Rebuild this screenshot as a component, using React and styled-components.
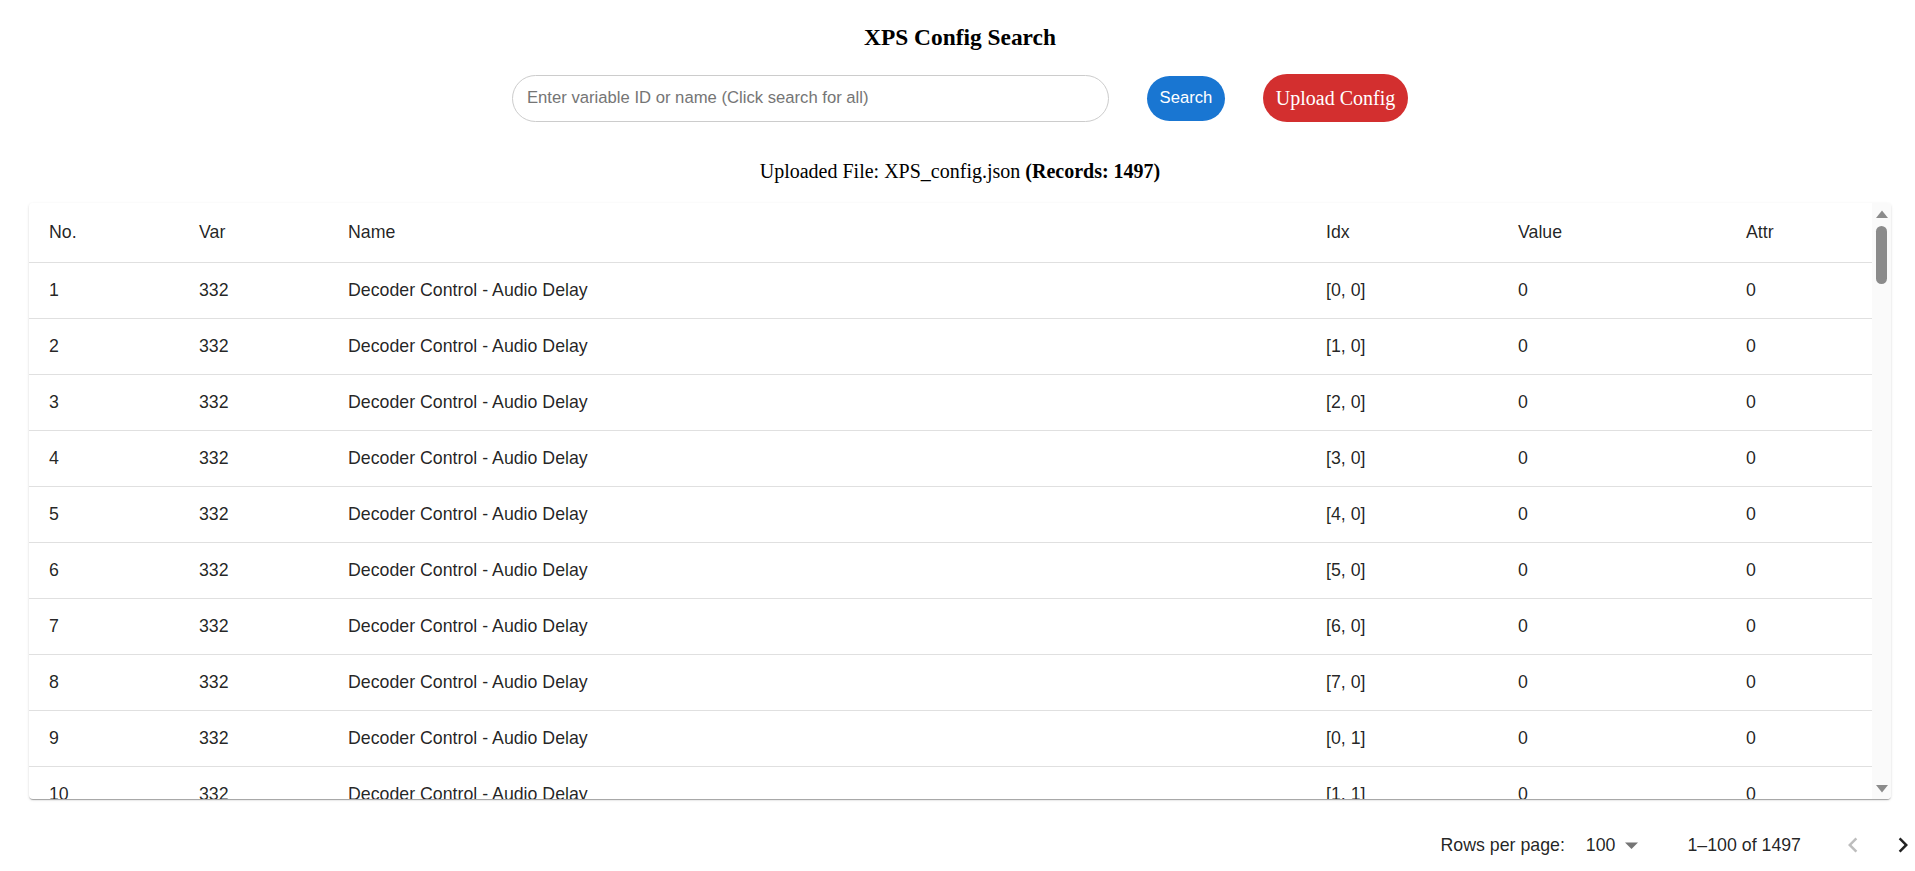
import React from 'react';
import styled, { createGlobalStyle } from 'styled-components';

const GlobalStyle = createGlobalStyle`
  html, body {
    margin: 0;
    padding: 0;
    background: #ffffff;
  }
  body {
    font-family: "Liberation Serif", "Times New Roman", serif;
    color: #000000;
  }
`;

const columns = [
  { key: 'no', label: 'No.', width: 150 },
  { key: 'var', label: 'Var', width: 149 },
  { key: 'name', label: 'Name', width: 978 },
  { key: 'idx', label: 'Idx', width: 192 },
  { key: 'value', label: 'Value', width: 228 },
  { key: 'attr', label: 'Attr', width: 146 },
];

const rows = Array.from({ length: 100 }, (_, i) => ({
  no: i + 1,
  var: 332,
  name: 'Decoder Control - Audio Delay',
  idx: `[${i % 8}, ${Math.floor(i / 8)}]`,
  value: 0,
  attr: 0,
}));

const PageWrapper = styled.div`
  display: flex;
  flex-direction: column;
  padding: 23px 24px 0 29px;
`;

const Title = styled.h2`
  margin: 0;
  text-align: center;
  font-size: 23.4px;
  line-height: 28px;
  font-weight: 700;
`;

const SearchBar = styled.div`
  margin-top: 23px;
  height: 48px;
  display: flex;
  align-items: center;
  justify-content: center;
  gap: 38px;
`;

const SearchInput = styled.input`
  width: 597px;
  height: 47px;
  box-sizing: border-box;
  border: 1px solid #cccccc;
  border-radius: 24px;
  padding: 0 14px;
  font-family: "Liberation Sans", Arial, sans-serif;
  font-size: 16.67px;
  color: #000000;
  outline: none;
  &::placeholder {
    color: #757575;
  }
`;

const PillButton = styled.button`
  width: ${(p) => p.$w}px;
  height: ${(p) => p.$h}px;
  padding: 0;
  border: none;
  border-radius: 24px;
  background: ${(p) => p.$bg};
  color: #ffffff;
  font-family: ${(p) => (p.$serif ? '"Liberation Serif", "Times New Roman", serif' : '"Liberation Sans", Arial, sans-serif')};
  font-size: ${(p) => p.$fs}px;
  cursor: pointer;
`;

const FileInfo = styled.p`
  margin: 38px 0 0;
  text-align: center;
  font-size: 20px;
  line-height: 23px;
`;

const TableCard = styled.div`
  margin-top: 20px;
  height: 596px;
  display: flex;
  border-radius: 4px;
  overflow: hidden;
  background: #ffffff;
  box-shadow: 0px 2px 1px -1px rgba(0, 0, 0, 0.2), 0px 1px 1px 0px rgba(0, 0, 0, 0.14), 0px 1px 3px 0px rgba(0, 0, 0, 0.12);
`;

const TableViewport = styled.div`
  flex: 1;
  min-width: 0;
  overflow-y: auto;
  overflow-x: hidden;
  scrollbar-width: none;
  &::-webkit-scrollbar {
    display: none;
  }
`;

const ScrollRail = styled.div`
  width: 19px;
  flex-shrink: 0;
  display: flex;
  flex-direction: column;
  background: #fafafa;
`;

const RailArrow = styled.div`
  height: 19px;
  display: flex;
  align-items: center;
  justify-content: center;
  padding-top: ${(p) => (p.$up ? 2 : 0)}px;
  padding-bottom: ${(p) => (p.$up ? 0 : 2)}px;
  box-sizing: border-box;
`;

const RailTrack = styled.div`
  flex: 1;
  display: flex;
  justify-content: center;
`;

const RailThumb = styled.div`
  margin-top: 4px;
  width: 11px;
  height: 58px;
  border-radius: 6px;
  background: #8b8b8b;
`;

const DataTable = styled.table`
  width: 100%;
  table-layout: fixed;
  border-collapse: separate;
  border-spacing: 0;
  font-family: "Liberation Sans", Arial, sans-serif;
  font-size: 17.75px;
  color: rgba(0, 0, 0, 0.87);
`;

const HeadCell = styled.th`
  position: sticky;
  top: 0;
  z-index: 1;
  box-sizing: border-box;
  height: 60px;
  padding: 0 20px;
  background: #ffffff;
  border-bottom: 1px solid #e0e0e0;
  text-align: left;
  font-weight: 400;
  white-space: nowrap;
`;

const BodyCell = styled.td`
  box-sizing: border-box;
  height: 56px;
  padding: 0 20px;
  border-bottom: 1px solid #e0e0e0;
  white-space: nowrap;
  overflow: hidden;
`;

const PaginationBar = styled.div`
  margin: 20px -22px 0 0;
  height: 52px;
  display: flex;
  align-items: center;
  justify-content: flex-end;
  font-family: "Liberation Sans", Arial, sans-serif;
  font-size: 17.75px;
  color: rgba(0, 0, 0, 0.87);
`;

const PageLabel = styled.span`
  margin-left: ${(p) => p.$ml || 0}px;
  white-space: nowrap;
`;

const RowsSelect = styled.div`
  margin-left: 21px;
  display: flex;
  align-items: center;
  gap: 10px;
  cursor: pointer;
`;

const NavButton = styled.button`
  margin-left: ${(p) => p.$ml}px;
  padding: 0;
  border: none;
  background: transparent;
  display: flex;
  color: ${(p) => (p.disabled ? '#bdbdbd' : '#222222')};
  cursor: ${(p) => (p.disabled ? 'default' : 'pointer')};
`;

const DropArrow = () => (
  <svg width="13" height="7" viewBox="0 0 13 7">
    <path d="M0 0.5 L6.5 7 L13 0.5 Z" fill="#757575" />
  </svg>
);

const RailTriangle = ({ up }) => (
  <svg width="12" height="8" viewBox="0 0 12 8">
    <path d={up ? 'M6 0.5 L12 8 L0 8 Z' : 'M0 0 L12 0 L6 7.5 Z'} fill="#8b8b8b" />
  </svg>
);

const ChevronLeft = () => (
  <svg width="20" height="30" viewBox="4 0 16 24">
    <path fill="currentColor" d="M15.41 16.59 10.83 12l4.58-4.59L14 6l-6 6 6 6 1.41-1.41z" />
  </svg>
);

const ChevronRight = () => (
  <svg width="20" height="30" viewBox="4 0 16 24">
    <path fill="currentColor" d="M8.59 16.59 13.17 12 8.59 7.41 10 6l6 6-6 6-1.41-1.41z" />
  </svg>
);

const App = () => {
  return (
    <>
      <GlobalStyle />
      <PageWrapper>
        <Title>XPS Config Search</Title>
        <SearchBar>
          <SearchInput placeholder="Enter variable ID or name (Click search for all)" />
          <PillButton $w={78} $h={45} $bg="#1976d2" $fs={16.67}>Search</PillButton>
          <PillButton $w={145} $h={48} $bg="#d32f2f" $fs={20} $serif>Upload Config</PillButton>
        </SearchBar>
        <FileInfo>
          Uploaded File: XPS_config.json <b>(Records: 1497)</b>
        </FileInfo>
        <TableCard>
          <TableViewport>
            <DataTable>
              <colgroup>
                {columns.map((col) => (
                  <col key={col.key} style={{ width: col.width }} />
                ))}
              </colgroup>
              <thead>
                <tr>
                  {columns.map((col) => (
                    <HeadCell key={col.key}>{col.label}</HeadCell>
                  ))}
                </tr>
              </thead>
              <tbody>
                {rows.map((row) => (
                  <tr key={row.no}>
                    {columns.map((col) => (
                      <BodyCell key={col.key}>{row[col.key]}</BodyCell>
                    ))}
                  </tr>
                ))}
              </tbody>
            </DataTable>
          </TableViewport>
          <ScrollRail>
            <RailArrow $up>
              <RailTriangle up />
            </RailArrow>
            <RailTrack>
              <RailThumb />
            </RailTrack>
            <RailArrow>
              <RailTriangle />
            </RailArrow>
          </ScrollRail>
        </TableCard>
        <PaginationBar>
          <PageLabel>Rows per page:</PageLabel>
          <RowsSelect>
            <span>100</span>
            <DropArrow />
          </RowsSelect>
          <PageLabel $ml={49}>1–100 of 1497</PageLabel>
          <NavButton $ml={42} disabled>
            <ChevronLeft />
          </NavButton>
          <NavButton $ml={30}>
            <ChevronRight />
          </NavButton>
        </PaginationBar>
      </PageWrapper>
    </>
  );
};

export default App;
